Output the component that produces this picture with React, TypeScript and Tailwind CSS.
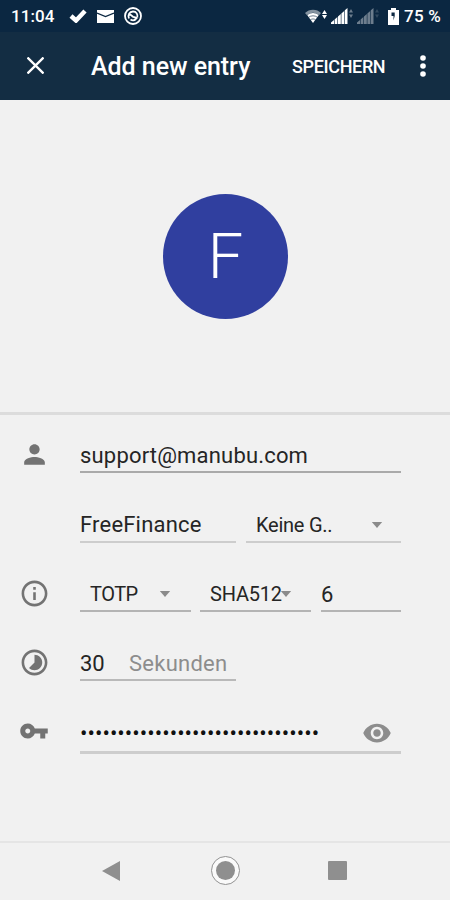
import type { ReactNode } from "react";

interface FieldProps {
  className?: string;
  children: ReactNode;
}

interface RowProps {
  className: string;
  icon?: ReactNode;
  children: ReactNode;
}

function Field({ className = "", children }: FieldProps) {
  return (
    <div className={`flex h-full items-center whitespace-nowrap ${className}`}>
      {children}
    </div>
  );
}

function Row({ className, icon, children }: RowProps) {
  return (
    <div className={`flex pr-[49px] ${className}`}>
      <div className="flex w-[80px] shrink-0 items-center pl-[19px] text-[#737373]">
        {icon}
      </div>
      <div className="flex min-w-0 flex-1">{children}</div>
    </div>
  );
}

function Icon({ path, className = "size-7" }: { path: string; className?: string }) {
  return (
    <svg viewBox="0 0 24 24" fill="currentColor" className={`shrink-0 ${className}`}>
      <path d={path} />
    </svg>
  );
}

function Caret() {
  return (
    <svg viewBox="0 0 12 7" className="h-[6px] w-[12px] shrink-0 fill-[#8b8b8b]">
      <path d="M0 0h12L6 7z" />
    </svg>
  );
}

function Signal({ className = "" }: { className?: string }) {
  return (
    <svg viewBox="0 0 23 16" fill="currentColor" className={`h-[16px] w-[23px] ${className}`}>
      <path d="M0 16v-1.500L3 12v4zM3.600 16v-4.500l2.800-2.500v7zM7 16V8.500L9.800 6v10zM10.400 16V5.500l2.800-2.500v13zM13.800 16V2.300L16.500 0v16z" />
      <path d="M20 1l2 3.500h-4zM20 10l2-3.500h-4z" opacity=".4" />
    </svg>
  );
}

function StatusBar() {
  return (
    <div className="flex h-8 items-center bg-[#0b2741] pl-[11px] text-white">
      <span className="w-[58px] pt-px text-[17px] font-medium tracking-[0.1px]">11:04</span>
      <svg viewBox="0 0 18 14" className="h-[14px] w-[18px]">
        <path d="M2 7l5 4.500L16 2" fill="none" stroke="white" strokeWidth="4.500" />
      </svg>
      <svg viewBox="0 0 17 13" className="ml-[10px] h-[13px] w-[17px]">
        <path d="M0 0h17v13H0z" fill="white" />
        <path d="M0 3l8.500 3.500L17 3" fill="none" stroke="#0b2741" strokeWidth="1.300" />
      </svg>
      <svg viewBox="0 0 18 18" className="ml-[10px] h-[18px] w-[18px]" fill="none" stroke="white">
        <circle cx="9" cy="9" r="8" strokeWidth="1.800" />
        <path d="M5 11.500C3.500 8 5.500 4.500 9 4.500c3.500 0 5 3 4.300 6M5.500 7.500c2 0 2.500 2 4 2.500s2.500 0 3.500 2M6.500 12.500c1.800 1.200 4 1 5.500-.5" strokeWidth="1.800" />
      </svg>
      <div className="ml-auto flex w-[145px] items-center">
        <svg viewBox="0 0 22 15" className="h-[15px] w-[22px] fill-white">
          <path d="M0 4C4-.5 12-.5 16 4l-2 2.200C11 2.800 5 2.800 2 6.200z" opacity=".5" />
          <path d="M2.300 6.300C5.500 3.200 10.500 3.200 13.700 6.300L8 14z" />
          <path d="M3.500 8.300c2.500-2 6.500-2 9 0M5.500 10.700c1.500-1 3.500-1 5 0" fill="none" stroke="#0b2741" strokeWidth=".6" />
          <path d="M19.500 1l2.500 4h-5zM19.500 10l2.500-4h-5z" />
        </svg>
        <Signal className="ml-[4px]" />
        <Signal className="ml-[3px] opacity-40" />
        <svg viewBox="0 0 11 17" className="ml-[8px] h-[17px] w-[11px]">
          <path d="M3 0h5v2h3v15H0V2h3z" fill="white" />
          <path d="M3.500 4.500h3.200v3.500L5.500 12.500V8H3.500z" fill="#0b2741" />
        </svg>
        <span className="ml-[5px] pt-px text-[17px] font-medium tracking-[0.400px] [word-spacing:-0.500px]">75 %</span>
      </div>
    </div>
  );
}

function AppBar() {
  return (
    <div className="flex h-[68px] items-center bg-[#132d43] pl-[27px] text-white">
      <svg viewBox="0 0 17 17" className="mt-[-1px] h-[17px] w-[17px]">
        <path d="M.5 .5l16 16M16.500 .5L.5 16.500" stroke="white" strokeWidth="2.300" />
      </svg>
      <h1 className="ml-[47px] w-[201px] pt-[2px] text-[25px] font-medium tracking-[-0.050px] whitespace-nowrap">
        Add new entry
      </h1>
      <button className="w-[128px] text-left text-[18px] font-medium tracking-[-0.350px]">SPEICHERN</button>
      <svg viewBox="0 0 6 22" className="h-[22px] w-[6px] fill-white">
        <circle cx="3" cy="3" r="2.800" />
        <circle cx="3" cy="11" r="2.800" />
        <circle cx="3" cy="19" r="2.800" />
      </svg>
    </div>
  );
}

function NavBar() {
  return (
    <div className="flex h-[59px] items-center border-t-2 border-[#e5e5e5] bg-[#f1f1f1] pb-px pl-[102px]">
      <svg viewBox="0 0 18 20" className="mt-[-1px] h-[20px] w-[18px] fill-[#8f8f8f]">
        <path d="M0 10L18 0v20z" />
      </svg>
      <div className="mt-[-1px] ml-[91px] flex size-[29px] items-center justify-center rounded-full border-[1.500px] border-[#929292] bg-[#fafafa]">
        <div className="size-[19px] rounded-full bg-[#8f8f8f]" />
      </div>
      <div className="mt-[-1px] ml-[88px] size-[19px] rounded-[1px] bg-[#8f8f8f]" />
    </div>
  );
}

function App() {
  return (
    <div className="flex h-[900px] w-[450px] flex-col overflow-hidden bg-[#f1f1f1] font-['Roboto',sans-serif] text-[#252525]">
      <StatusBar />
      <AppBar />
      <div className="flex h-[312px] items-center justify-center pt-px pl-px">
        <div className="flex size-[125px] items-center justify-center rounded-full bg-[#303f9f] text-[63px] leading-none font-light text-white">
          F
        </div>
      </div>
      <div className="h-[3px] bg-[#dcdcdc]" />

      <Row
        className="h-[58px]"
        icon={<Icon className="mb-[-20px] size-[31px]" path="M12 12c2.210 0 4-1.790 4-4s-1.790-4-4-4-4 1.790-4 4 1.790 4 4 4zm0 2c-2.670 0-8 1.340-8 4v2h16v-2c0-2.660-5.330-4-8-4z" />}
      >
        <Field className="w-full border-b-2 border-[#aaaaaa] pt-[25px] text-[22px] tracking-[0.180px]">
          support@manubu.com
        </Field>
      </Row>

      <Row className="h-[70px]">
        <Field className="w-[156px] border-b-2 border-[#cdcdcd] pt-[35px] text-[22px] tracking-[0.200px]">
          FreeFinance
        </Field>
        <Field className="ml-[10px] flex-1 border-b-2 border-[#cdcdcd] pt-[35px] pl-[10px] text-[20px]">
          <span className="w-[115px] tracking-[-0.250px]">Keine G..</span>
          <Caret />
        </Field>
      </Row>

      <Row
        className="h-[69px]"
        icon={<Icon className="mt-[31px] size-[31px]" path="M11 17h2v-6h-2v6zm1-15C6.480 2 2 6.480 2 12s4.480 10 10 10 10-4.480 10-10S17.520 2 12 2zm0 18c-4.410 0-8-3.590-8-8s3.590-8 8-8 8 3.590 8 8-3.590 8-8 8zM11 9h2V7h-2v2z" />}
      >
        <Field className="w-[111px] border-b-2 border-[#b4b4b4] pt-[34px] pl-[10px] text-[20px]">
          <span className="w-[69px] tracking-[-0.500px]">TOTP</span>
          <Caret />
        </Field>
        <Field className="ml-[9px] w-[111px] border-b-2 border-[#b4b4b4] pt-[34px] pl-[10px] text-[20px]">
          <span className="w-[70px] tracking-[-0.200px]">SHA512</span>
          <Caret />
        </Field>
        <Field className="ml-[10px] flex-1 border-b-2 border-[#b4b4b4] pt-[36px] text-[22px]">6</Field>
      </Row>

      <Row
        className="h-[69px]"
        icon={<Icon className="mt-[31px] size-[31px]" path="M16.240 7.760C15.070 6.590 13.540 6 12 6v6l-4.240 4.240c2.340 2.340 6.140 2.340 8.490 0 2.340-2.340 2.340-6.140-.01-8.480zM12 2C6.480 2 2 6.480 2 12s4.480 10 10 10 10-4.480 10-10S17.520 2 12 2zm0 18c-4.420 0-8-3.580-8-8s3.580-8 8-8 8 3.580 8 8-3.580 8-8 8z" />}
      >
        <Field className="w-[156px] border-b-2 border-[#b9b9b9] pt-[36px] text-[22px]">
          <span className="w-[49px]">30</span>
          <span className="tracking-[0.250px] text-[#8d8d8d]">Sekunden</span>
        </Field>
      </Row>

      <Row
        className="h-[73px]"
        icon={<Icon className="mt-[26px] size-[30px]" path="M12.650 10C11.830 7.670 9.610 6 7 6c-3.310 0-6 2.690-6 6s2.690 6 6 6c2.610 0 4.830-1.670 5.650-4H17v4h4v-4h2v-4H12.650zM7 14c-1.100 0-2-.9-2-2s.9-2 2-2 2 .9 2 2-.9 2-2 2z" />}
      >
        <Field className="w-full border-b-3 border-[#cdcdcd] pt-[35px] text-[22px] text-[#111]">
          <span className="w-[282px] tracking-[0.050px]">{"•".repeat(32)}</span>
          <Icon className="mt-[-1px] size-[30px] text-[#8d8d8d]" path="M12 4.500C7 4.500 2.730 7.610 1 12c1.730 4.390 6 7.500 11 7.500s9.270-3.110 11-7.500c-1.730-4.390-6-7.500-11-7.500zM12 17c-2.760 0-5-2.240-5-5s2.240-5 5-5 5 2.240 5 5-2.240 5-5 5zm0-8c-1.660 0-3 1.340-3 3s1.340 3 3 3 3-1.340 3-3-1.340-3-3-3z" />
        </Field>
      </Row>

      <div className="flex-1" />
      <NavBar />
    </div>
  );
}

export default App;
